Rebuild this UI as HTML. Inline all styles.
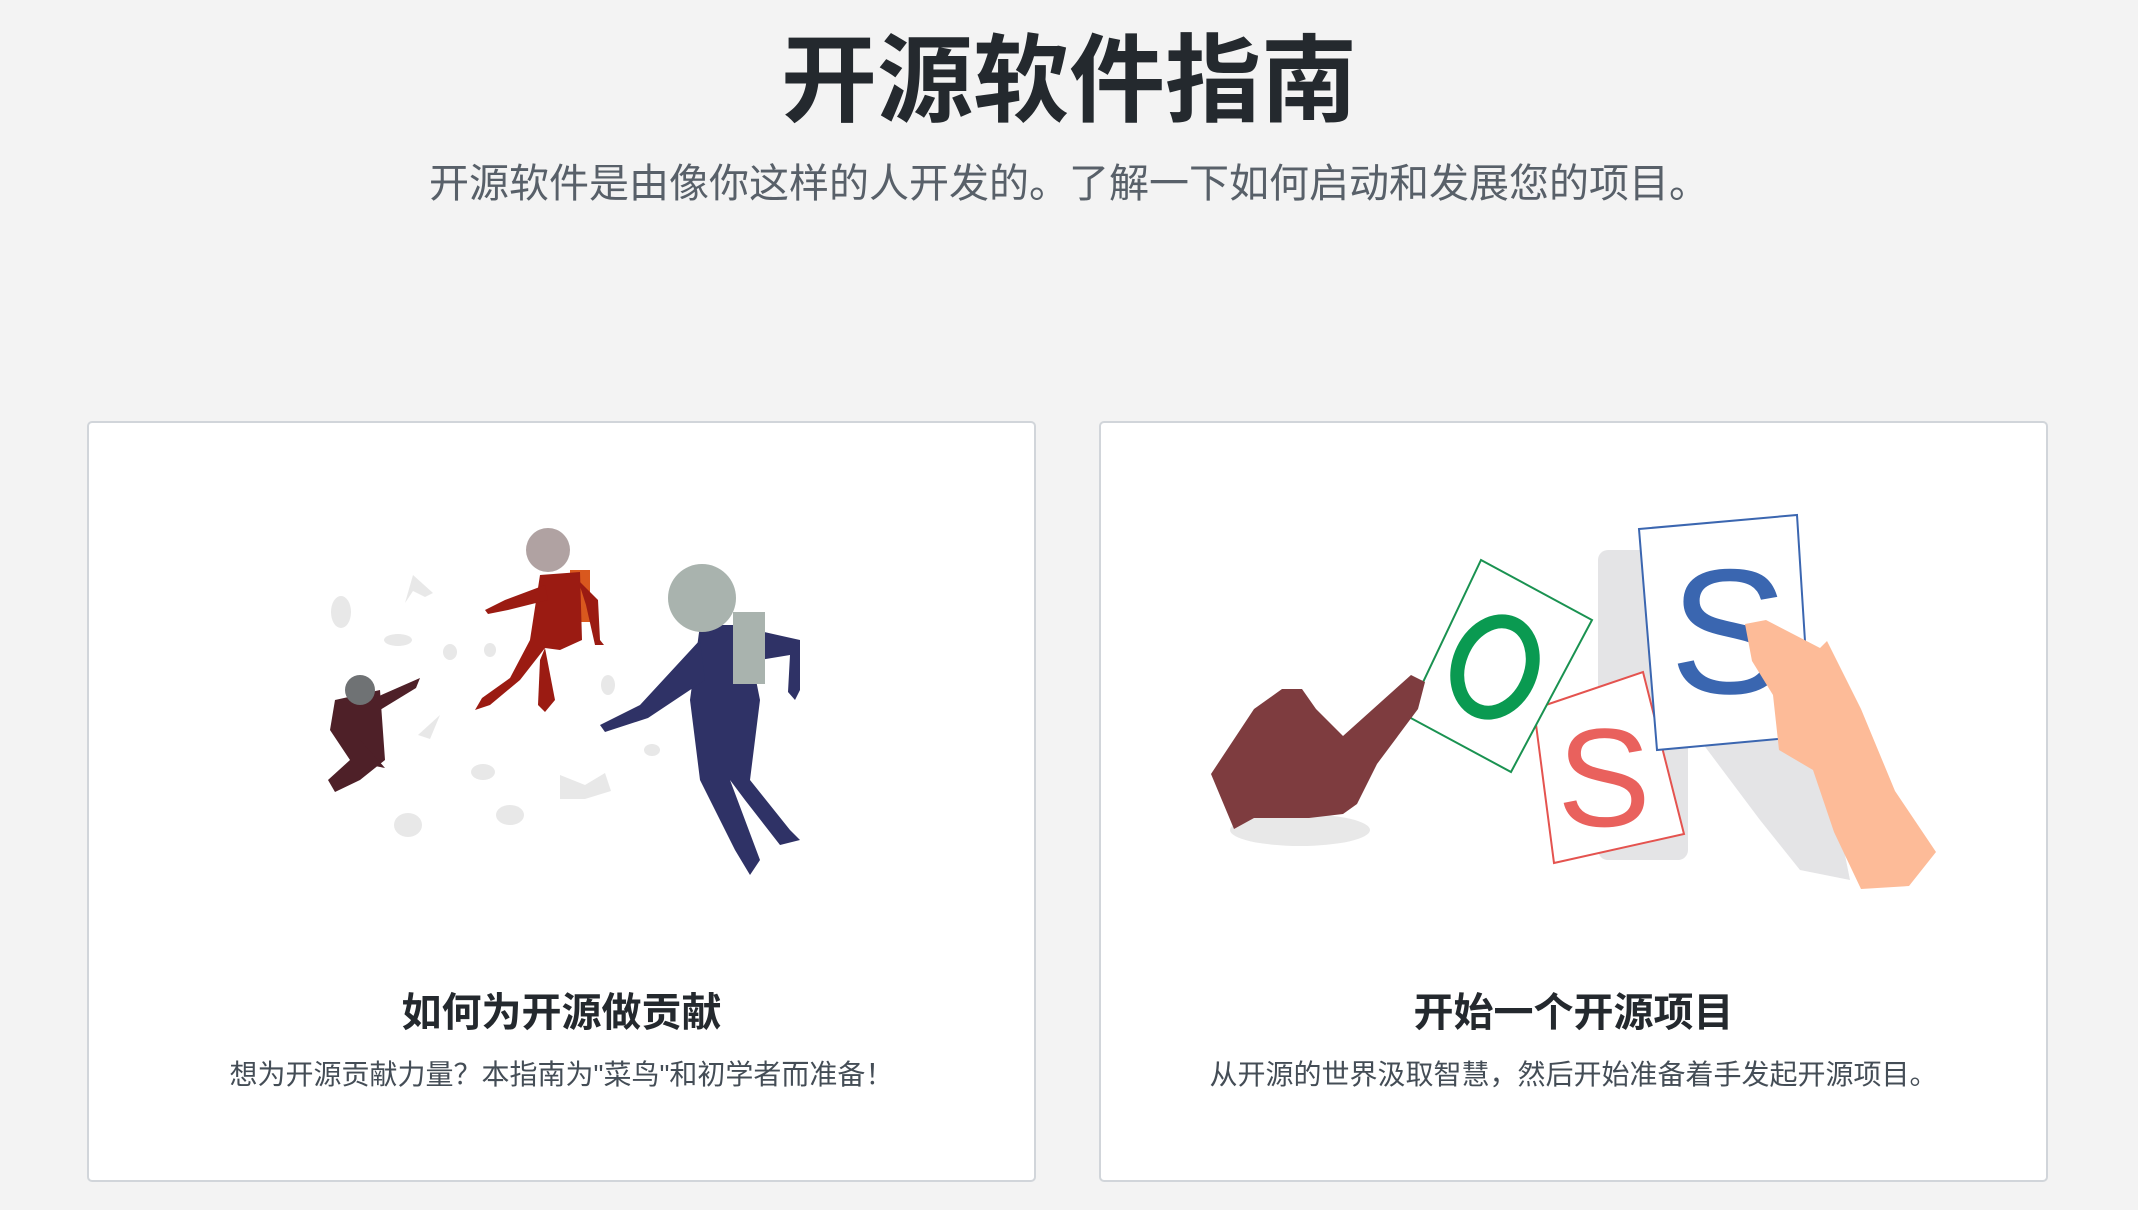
<!DOCTYPE html>
<html><head><meta charset="utf-8"><style>
html,body{margin:0;padding:0;}
body{width:2138px;height:1210px;background:#f3f3f3;position:relative;overflow:hidden;font-family:"Liberation Sans","Noto Sans CJK SC",sans-serif;}
.t{position:absolute;left:0;width:2138px;text-align:center;white-space:nowrap;}
h1{margin:0;font-size:96px;line-height:120px;top:22px;color:#24292e;font-weight:700;}
.sub{top:159px;font-size:40px;line-height:50px;color:#586069;}
.card{position:absolute;top:421px;width:945px;height:757px;background:#fff;border:2px solid #d1d5da;border-radius:5px;}
.ct{position:absolute;left:0;width:100%;text-align:center;top:565px;font-size:40px;line-height:50px;font-weight:700;color:#24292e;}
.cd{position:absolute;left:0;width:100%;text-align:center;top:632px;font-size:28px;line-height:40px;color:#444d56;}
svg{position:absolute;left:0;top:0;}
</style></head><body>
<h1 class="t">开源软件指南</h1>
<div class="t sub">开源软件是由像你这样的人开发的。了解一下如何启动和发展您的项目。</div>
<div class="card" style="left:87px"><div class="ct">如何为开源做贡献</div><div class="cd">想为开源贡献力量？本指南为"菜鸟"和初学者而准备！</div></div>
<div class="card" style="left:1099px"><div class="ct">开始一个开源项目</div><div class="cd">从开源的世界汲取智慧，然后开始准备着手发起开源项目。</div></div>
<svg width="2138" height="1210" viewBox="0 0 2138 1210">
<g fill="#e8e8e8">
<ellipse cx="341" cy="612" rx="10" ry="16"/><path d="M413 575l20 18 -8 4 -12-6 -8 12z"/>
<ellipse cx="398" cy="640" rx="14" ry="6"/><ellipse cx="450" cy="652" rx="7" ry="8"/>
<path d="M440 715l-22 20 12 4z"/><ellipse cx="483" cy="772" rx="12" ry="8"/>
<path d="M560 775l25 10 20-12 6 18 -26 8 -25 0z"/><ellipse cx="408" cy="825" rx="14" ry="12"/>
<ellipse cx="510" cy="815" rx="14" ry="10"/><ellipse cx="608" cy="685" rx="7" ry="10"/>
<ellipse cx="652" cy="750" rx="8" ry="6"/><ellipse cx="490" cy="650" rx="6" ry="7"/>
</g>
<g fill="#2f3266">
<path d="M700 625 L745 625 L760 700 L750 780 L790 830 L800 840 L780 845 L745 800 L730 780 L760 860 L750 875 L735 850 L700 780 L690 700 Z"/>
<path d="M700 640 L640 705 L600 725 L605 732 L648 718 L705 680 Z"/>
<path d="M755 630 L800 640 L800 690 L795 700 L788 692 L790 655 L760 660 Z"/>
</g>
<rect x="733" y="612" width="32" height="72" fill="#a9b3ae"/>
<circle cx="702" cy="598" r="34" fill="#a9b3ae"/>
<rect x="570" y="570" width="20" height="52" fill="#d9581e"/>
<g fill="#9b1b12">
<path d="M540 575 L580 572 L582 640 L560 650 L545 648 L520 680 L490 705 L475 710 L482 698 L510 678 L530 640 Z"/>
<path d="M545 648 L555 700 L545 712 L538 705 L540 660 Z"/>
<path d="M545 585 L505 600 L485 610 L488 614 L508 610 L548 600 Z"/>
<path d="M578 580 L598 600 L600 640 L604 645 L595 645 L586 605 Z"/>
</g>
<circle cx="548" cy="550" r="22" fill="#b0a2a2"/>
<g fill="#4e2028">
<path d="M335 700 L380 690 L385 760 L360 780 L335 792 L328 780 L350 760 L330 730 Z"/>
<path d="M370 700 L420 678 L416 688 L380 710 Z"/>
<path d="M360 740 L378 760 L385 768 L375 766 L355 750 Z"/>
</g>
<circle cx="360" cy="690" r="15" fill="#6f7274"/>
<rect x="1598" y="550" width="90" height="310" rx="10" fill="#e4e4e6"/>
<ellipse cx="1300" cy="830" rx="70" ry="16" fill="#e8e8e8"/>
<path d="M1700 740 L1790 720 L1830 780 L1850 880 L1800 870 L1760 820 Z" fill="#e4e4e6"/>
<g stroke-width="2" fill="#fff">
<polygon points="1534,709 1643,672 1684,834 1554,863" stroke="#e4534f"/>
<text x="1604" y="826" font-size="140" fill="#e9615d" text-anchor="middle" font-family="Liberation Sans,sans-serif">S</text>
<polygon points="1481,560 1592,620 1511,772 1407,716" stroke="#1a9251"/>
<ellipse cx="1495" cy="667" rx="36" ry="47" transform="rotate(22 1495 667)" fill="none" stroke="#0a9a51" stroke-width="14"/>
<polygon points="1639,529 1797,515 1811,736 1657,750" stroke="#3b66b0"/>
<text x="1729" y="693" font-size="178" fill="#3a66b0" text-anchor="middle" font-family="Liberation Sans,sans-serif">S</text>
</g>
<polygon points="1211,774 1254,709 1282,689 1302,689 1316,709 1343,736 1411,675 1425,682 1418,709 1377,764 1357,804 1343,814 1309,818 1254,818 1234,829" fill="#7e3c3f"/>
<polygon points="1745,624 1766,620 1820,648 1827,641 1861,709 1895,791 1936,852 1909,886 1861,889 1834,832 1813,770 1779,750 1773,695 1752,661" fill="#fdbb98"/>
</svg>
</body></html>
